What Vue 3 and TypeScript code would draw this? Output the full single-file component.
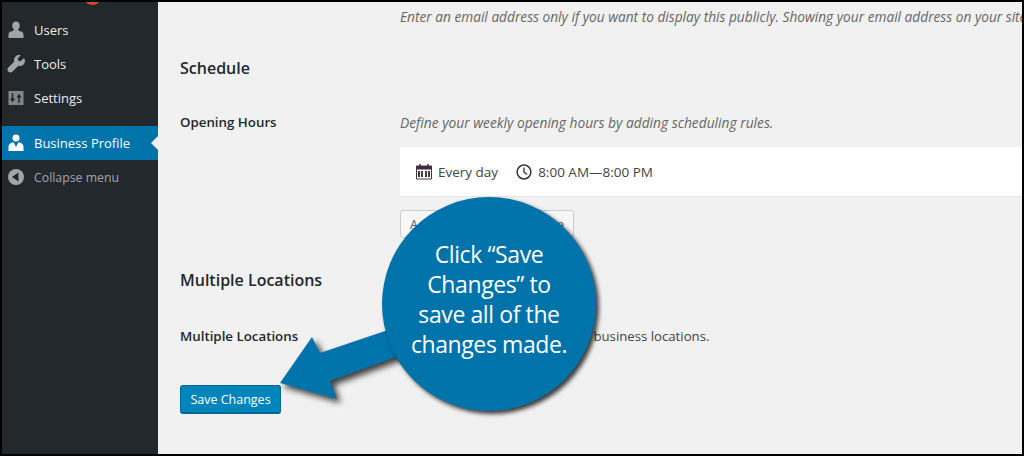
<script setup lang="ts">
interface MenuItem { label: string; icon: string }
const menu: MenuItem[] = [
  { label: 'Users', icon: 'user' },
  { label: 'Tools', icon: 'tool' },
  { label: 'Settings', icon: 'settings' },
]
const calloutLines: string[] = ['Click “Save', 'Changes” to', 'save all of the', 'changes made.']
</script>

<template>
  <div class="frame">
    <aside class="sidebar">
      <div class="clipped"><span class="bubble"></span></div>
      <div v-for="m in menu" :key="m.label" class="item">
        <svg class="ico" viewBox="0 0 20 20">
          <path v-if="m.icon === 'user'" fill="#a0a5aa" d="M10 1.500c2.400 0 3.800 1.900 3.800 4.200 0 1.700-.8 3.200-1.900 4 .2.600.7 1 1.600 1.300 2 .6 3.900 1.200 4 3.200V18H2.500v-3.800c.1-2 2-2.600 4-3.200.9-.3 1.400-.7 1.600-1.300-1.100-.8-1.900-2.300-1.900-4C6.200 3.400 7.600 1.500 10 1.500z"/>
          <path v-else-if="m.icon === 'tool'" fill="#a0a5aa" d="M17.700 4.200l-3.100 3.100-2.300-.6-.6-2.300 3.100-3.100c-1.800-.6-3.900-.2-5.300 1.200-1.400 1.400-1.800 3.400-1.200 5.100L2.200 13.700c-1 1-1 2.700 0 3.700l.4.400c1 1 2.700 1 3.700 0l6.100-6.100c1.700.6 3.700.2 5.100-1.200 1.400-1.400 1.800-3.500 1.200-5.300z"/>
          <template v-else>
            <rect x="2.500" y="3" width="15" height="14" fill="#82878c"/>
            <path d="M6.500 5v7M4.800 10.500l1.700 2.500 1.700-2.500M13 15V8M11.300 9.500 13 7l1.700 2.500" stroke="#23282d" stroke-width="1.500" fill="none"/>
          </template>
        </svg>
        <span>{{ m.label }}</span>
      </div>
      <div class="item active">
        <svg class="ico" viewBox="0 0 20 20">
          <circle cx="10" cy="5" r="3.500" fill="#fff"/>
          <path fill="#fff" d="M2.500 18v-4.500c0-2.200 2-3.800 5-4.300L10 14l2.500-4.800c3 .5 5 2.100 5 4.300V18z"/>
        </svg>
        <span>Business Profile</span>
        <i class="notch"></i>
      </div>
      <div class="item collapse">
        <svg class="ico" viewBox="0 0 20 20">
          <circle cx="10" cy="10" r="8" fill="#a0a5aa"/>
          <path d="M12.500 5.500v9L6 10z" fill="#23282d"/>
        </svg>
        <span>Collapse menu</span>
      </div>
    </aside>

    <main class="content">
      <div class="form">
        <p class="desc top">Enter an email address only if you want to display this publicly. Showing your email address on your site may cause you to receive spam.</p>
        <h2 class="section schedule">Schedule</h2>
        <div class="row hours">
          <div class="label">Opening Hours</div>
          <div class="field">
            <p class="desc rules">Define your weekly opening hours by adding scheduling rules.</p>
            <div class="card">
              <svg class="cal" viewBox="0 0 16 16">
                <path d="M.5 2.500h15v13H.5z" fill="none" stroke="#4a2f4a" stroke-width="1"/>
                <path d="M1 2.500h14V6H1z" fill="#3d2c3d"/>
                <path d="M3 7.500v6M6 7.500v6M10 7.500v6M13 7.500v6" stroke="#32282f" stroke-width="1.800"/>
                <path d="M4 .5v3M12 .5v3" stroke="#4a2f4a" stroke-width="1.500"/>
              </svg>
              <span class="when">Every day</span>
              <svg class="clock" viewBox="0 0 16 16">
                <circle cx="8" cy="8" r="6.900" fill="none" stroke="#3a3a3a" stroke-width="1.500"/>
                <path d="M8 3.500V8l3 2.500" fill="none" stroke="#3a3a3a" stroke-width="1.400"/>
              </svg>
              <span>8:00 AM—8:00 PM</span>
            </div>
            <button class="add" type="button">Add another opening time</button>
          </div>
        </div>
        <h2 class="section multi">Multiple Locations</h2>
        <div class="row locs">
          <div class="label">Multiple Locations</div>
          <div class="field"><span class="plain">This website includes multiple business locations.</span></div>
        </div>
        <button class="save" type="button">Save Changes</button>
      </div>
    </main>

    <svg class="arrow" viewBox="0 0 1024 456" width="1024" height="456">
      <path fill="#0073aa" d="M280 383 312 337 320 353 400 326 410 352 330 381 337 399z"/>
    </svg>
    <div class="callout">
      <span v-for="l in calloutLines" :key="l">{{ l }}</span>
    </div>
  </div>
</template>

<style>
html, body { margin: 0; background: #000; }
</style>

<style scoped>
.frame {
  position: relative;
  width: 1024px;
  height: 456px;
  box-sizing: border-box;
  border: 2px solid #000;
  display: flex;
  overflow: hidden;
  font-family: "Open Sans", sans-serif;
  font-size: 13.500px;
  color: #444;
  background: #f1f1f1;
}
.sidebar { width: 156px; flex: none; background: #23282d; color: #eee; font-size: 13px; }
.clipped { height: 11px; overflow: hidden; position: relative; }
.bubble {
  position: absolute; left: 83px; top: -9px;
  width: 15px; height: 12px; border-radius: 50%; background: #d54e21;
}
.item {
  position: relative;
  display: flex;
  align-items: center;
  height: 34px;
  padding-left: 4px;
  gap: 8px;
}
.ico { width: 20px; height: 20px; flex: none; }
.item.active { margin-top: 11px; background: #0073aa; color: #fff; }
.collapse { color: #a0a5aa; font-size: 12.300px; }
.notch {
  position: absolute; right: 0; top: 10px;
  border: 7px solid transparent; border-left: 0; border-right: 7px solid #f1f1f1;
}
.content { flex: 1; min-width: 0; overflow: hidden; }
.form { width: 1000px; padding-left: 22px; }
.desc { margin: 0; font-style: italic; font-size: 13.700px; color: #666; white-space: nowrap; }
.desc.rules { font-size: 13.780px; }
.desc.top { margin: 6px 0 0 220px; line-height: 18px; }
.section { margin: 0; font-size: 16px; font-weight: 600; color: #23282d; line-height: 22px; }
.schedule { margin-top: 31px; }
.row { display: flex; }
.label { width: 220px; flex: none; font-weight: 600; font-size: 13.300px; color: #23282d; line-height: 18px; }
.hours { margin-top: 34px; }
.field { min-width: 0; }
.card {
  margin-top: 15px;
  width: 700px;
  height: 49px;
  background: #fff;
  box-shadow: 0 1px 1px rgba(0,0,0,.04);
  display: flex;
  align-items: center;
  padding-left: 16px;
  box-sizing: content-box;
}
.cal { width: 16px; height: 17px; margin-right: 6px; }
.when { margin-right: 18px; }
.clock { width: 16px; height: 16px; margin-right: 6px; }
.add {
  display: block;
  margin-top: 14px;
  width: 174px;
  height: 28px;
  padding: 0;
  border: 1px solid #ccc;
  border-radius: 3px;
  background: #f7f7f7;
  color: #555;
  font: inherit;
  font-size: 12.600px;
  white-space: nowrap;
  overflow: hidden;
}
.multi { margin-top: 31px; }
.locs { margin-top: 36px; line-height: 18px; }
.plain { white-space: nowrap; font-size: 13.200px; margin-left: 6px; }
.save {
  display: block;
  margin-top: 40px;
  width: 101px;
  height: 29px;
  padding: 0;
  border: 1px solid #006799;
  border-bottom-width: 2px;
  border-radius: 3px;
  background: #0085ba;
  color: #fff;
  font: inherit;
  font-size: 12.500px;
}
.arrow {
  position: absolute; left: -2px; top: -2px;
  filter: drop-shadow(4px 4px 3px rgba(0,0,0,.75));
  pointer-events: none;
}
.callout {
  position: absolute;
  left: 380px; top: 195px;
  width: 214px; height: 214px;
  padding-bottom: 10px;
  box-sizing: border-box;
  border-radius: 50%;
  background: #0073aa;
  box-shadow: 3px 3px 4px rgba(0,0,0,.75);
  color: #fff;
  font-size: 23px;
  letter-spacing: -0.4px;
  line-height: 30px;
  display: flex;
  flex-direction: column;
  align-items: center;
  justify-content: center;
}
</style>
